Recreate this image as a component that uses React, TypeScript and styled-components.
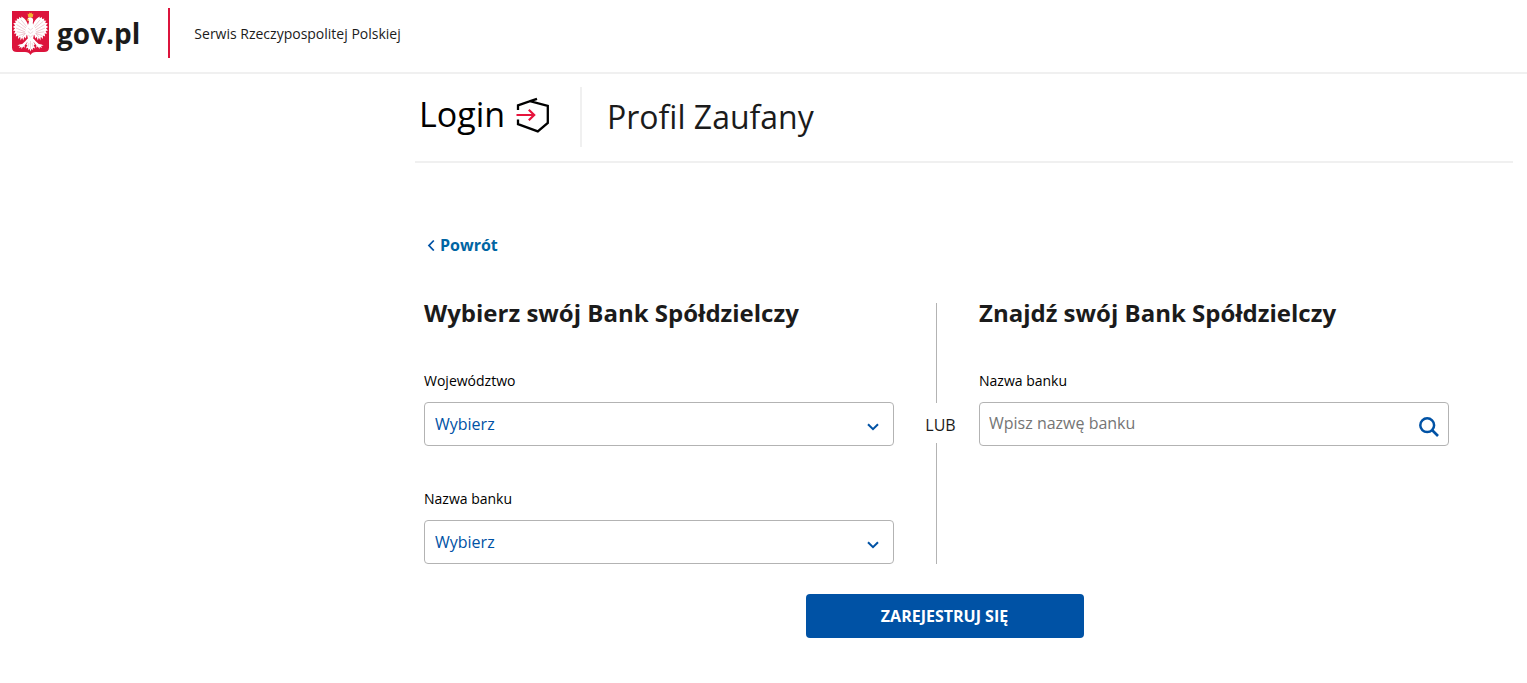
import React from 'react';
import styled, { createGlobalStyle } from 'styled-components';

const GlobalStyle = createGlobalStyle`
  *, *::before, *::after { box-sizing: border-box; }
  body {
    margin: 0;
    background: #fff;
    color: #1b1b1b;
    font-family: "Open Sans", "Noto Sans", sans-serif;
    font-size: 16px;
    line-height: 24px;
  }
`;

const TopBar = styled.header`
  display: flex;
  align-items: center;
  height: 74px;
  padding: 0 12px 6px;
  border-bottom: 2px solid #f0f0f0;
`;

const GovLink = styled.a`
  display: flex;
  align-items: center;
  gap: 8px;
  height: 50px;
  padding-right: 28px;
  border-right: 2px solid #dc143c;
  color: #1b1b1b;
  font-size: 28px;
  font-weight: 700;
  line-height: 36px;
  text-decoration: none;
`;

const ServiceName = styled.span`
  padding: 2px 0 0 24px;
  font-size: 14px;
`;

const Main = styled.main`
  padding: 13px 14px 0 415px;
`;

const Branding = styled.div`
  display: flex;
  height: 76px;
  border-bottom: 2px solid #f0f0f0;
`;

const LoginLink = styled.a`
  display: flex;
  align-items: center;
  justify-content: space-between;
  width: 167px;
  height: 60px;
  padding: 0 30px 6px 4px;
  border-right: 2px solid #f0f0f0;
  color: #000;
  font-size: 34px;
  line-height: 48px;
  text-decoration: none;
`;

const LoginIcon = styled.svg`
  margin-top: 2px;
`;

const ServiceTitle = styled.h1`
  margin: 0;
  padding: 6px 0 0 25px;
  font-size: 32px;
  font-weight: 400;
  line-height: 48px;
`;

const Content = styled.div`
  padding: 70px 64px 0 9px;
`;

const BackLink = styled.a`
  display: inline-flex;
  align-items: center;
  gap: 4px;
  padding-left: 3px;
  color: #0065a3;
  font-weight: 700;
  text-decoration: none;
`;

const Columns = styled.div`
  display: grid;
  grid-template-columns: minmax(0, 1fr) 85px minmax(0, 1fr);
  margin-top: 46px;
`;

const ColumnTitle = styled.h2`
  margin: 0 0 46px;
  font-size: 24px;
  font-weight: 700;
  line-height: 20px;
`;

const Field = styled.div`
  & + & { margin-top: 41px; }
`;

const Label = styled.label`
  display: block;
  margin-bottom: 9px;
  color: #000;
  font-size: 14px;
`;

const Control = styled.div`
  display: grid;
  align-items: center;

  & > * { grid-area: 1 / 1; }
`;

const Select = styled.select`
  appearance: none;
  width: 100%;
  height: 44px;
  padding: 0 40px 0 10px;
  border: 1px solid #b3b3b3;
  border-radius: 4px;
  background: #fff;
  color: #0052a5;
  font: inherit;
`;

const Chevron = styled.svg`
  justify-self: end;
  margin: 6px 15px 0 0;
  pointer-events: none;
`;

const SearchInput = styled.input`
  width: 100%;
  height: 44px;
  padding: 0 48px 2px 9px;
  border: 1px solid #b3b3b3;
  border-radius: 4px;
  background: #fff;
  color: #1b1b1b;
  font: inherit;

  &::placeholder { color: #757575; opacity: 1; }
`;

const SearchButton = styled.button`
  display: flex;
  justify-self: end;
  margin: 5px 10px 0 0;
  padding: 0;
  border: 0;
  background: none;
  cursor: pointer;
`;

const Divider = styled.div`
  display: flex;
  flex-direction: column;
  align-items: center;
`;

const Line = styled.div<{ $fill?: boolean }>`
  flex: ${({ $fill }) => ($fill ? '1' : '0 0 100px')};
  width: 1px;
  background: #b3b3b3;
`;

const Or = styled.span`
  padding: 4px 0 0 8px;
  line-height: 36px;
`;

const Actions = styled.div`
  display: flex;
  justify-content: center;
  padding: 30px 0 40px 16px;
`;

const SubmitButton = styled.button`
  width: 278px;
  height: 44px;
  border: 0;
  border-radius: 4px;
  background: #0052a5;
  color: #fff;
  font: inherit;
  font-weight: 700;
  text-transform: uppercase;
  cursor: pointer;
`;

const Wing = () => (
  <>
    <path
      d="M16.4 16.5C16.2 12 13.6 7.6 9.4 5.4L9.2 7.2 7 6 7 8 4.6 7.6 5.2 9.6 2.6 9.8 4 11.6 1.2 12.6 3.2 14.2 .9 16 3 17.2 1 19.6 3.4 20 2 22.8 4.4 22.6 3.8 25.6 6.2 24.6 6 28 8.2 25.8 8.6 29.4 10.2 26.4 11.2 29.4 12.4 25.8 13.8 27.4 14.6 24 17.6 22Z"
      fill="#fff"
    />
    <path
      d="M5.8 10.4 14 17M4.5 13.5 13.6 19.2M4 17 13.2 21M4.8 20.8 12.8 22M7 24.5 13 22.6M9 8.8 14.6 15.6M10.2 26 13.6 22"
      fill="none"
      stroke="#e3a9b6"
      strokeWidth=".6"
    />
    <path
      d="M15.6 27.4 13 30.6 10.2 33 7.4 33.4 5.4 34.6 8 35 6.8 37 9.2 36 9.6 38 11.2 35.6 12.8 36.8 12.6 34.4 14.6 31.8 17 30Z"
      fill="#fff"
    />
  </>
);

const Emblem = () => (
  <svg width="37" height="44" viewBox="0 0 37 44" aria-hidden="true">
    <path d="M0 0H37V36.5Q37 41 32 41H24Q20 41 18.5 44Q17 41 13 41H5Q0 41 0 36.5Z" fill="#dc143c" />
    <Wing />
    <g transform="matrix(-1 0 0 1 37 0)">
      <Wing />
    </g>
    <path
      d="M15.6 9.4 15.8 7.2Q17.2 5.9 19.4 6.4 21.6 7.2 21.2 9.5 20.2 11.8 21.4 15 23.4 20 21.4 26L20.8 30 23 33.6 21.6 34 23.2 37.6 21 36.8 20.6 39.2 19.5 37.8 18.5 40.4 17.5 37.8 16.4 39.2 16 36.8 13.8 37.6 15.4 34 14 33.6 16.2 30 15.6 26Q13.6 20 15.6 15 17 12 17 9.8Z"
      fill="#fff"
    />
    <path
      d="M16 17 18.5 19 21 17M15.8 20.5 18.5 22.5 21.2 20.5M16.2 24 18.5 26 20.8 24M18.5 30V38M17 32 16 36M20 32 21 36"
      fill="none"
      stroke="#e0bcc4"
      strokeWidth=".6"
    />
    <path d="M15.6 2.4 17 3.2 17.4 1.6 18.5 2.2 19.6 1.6 20 3.2 21.4 2.4 20.8 6.2H16.2Z" fill="#f2b632" />
    <path d="M16 7.6 14.6 9.4 17.2 9.2Z" fill="#f2b632" />
  </svg>
);

const LoginMark = () => (
  <LoginIcon width="34" height="36" viewBox="0 0 34 36" fill="none" aria-hidden="true">
    <path
      d="M2 13V8.4L14 4.2 31.8 8.8V26L21.8 34.4 2 27.2V22.4M13.4 4.4 21 1.8"
      stroke="#000"
      strokeWidth="2.3"
    />
    <path d="M.5 18H18M12.8 12.7 18.2 18 12.8 23.3" stroke="#e6143c" strokeWidth="2.2" />
  </LoginIcon>
);

const ChevronDown = () => (
  <Chevron width="12" height="8" viewBox="0 0 12 8" fill="none" aria-hidden="true">
    <path d="M1 1.2 6 6.2 11 1.2" stroke="#0052a5" strokeWidth="2" />
  </Chevron>
);

function BankSelect({ id, label }: { id: string; label: string }) {
  return (
    <Field>
      <Label htmlFor={id}>{label}</Label>
      <Control>
        <Select id={id} defaultValue="">
          <option value="">Wybierz</option>
        </Select>
        <ChevronDown />
      </Control>
    </Field>
  );
}

export default function App() {
  return (
    <>
      <GlobalStyle />
      <TopBar>
        <GovLink href="#gov">
          <Emblem />
          gov.pl
        </GovLink>
        <ServiceName>Serwis Rzeczypospolitej Polskiej</ServiceName>
      </TopBar>
      <Main>
        <Branding>
          <LoginLink href="#login">
            Login
            <LoginMark />
          </LoginLink>
          <ServiceTitle>Profil Zaufany</ServiceTitle>
        </Branding>
        <Content>
          <BackLink href="#back">
            <svg width="9" height="12" viewBox="0 0 9 12" fill="none" aria-hidden="true">
              <path d="M6.8 1.5 2 6.5 6.8 11.5" stroke="#0052a5" strokeWidth="1.8" />
            </svg>
            Powrót
          </BackLink>
          <form onSubmit={(event) => event.preventDefault()}>
            <Columns>
              <section>
                <ColumnTitle>Wybierz swój Bank Spółdzielczy</ColumnTitle>
                <BankSelect id="region" label="Województwo" />
                <BankSelect id="bank" label="Nazwa banku" />
              </section>
              <Divider>
                <Line />
                <Or>LUB</Or>
                <Line $fill />
              </Divider>
              <section>
                <ColumnTitle>Znajdź swój Bank Spółdzielczy</ColumnTitle>
                <Field>
                  <Label htmlFor="bank-search">Nazwa banku</Label>
                  <Control>
                    <SearchInput id="bank-search" type="text" placeholder="Wpisz nazwę banku" />
                    <SearchButton type="button" aria-label="Szukaj">
                      <svg width="20" height="20" viewBox="0 0 20 20" fill="none" aria-hidden="true">
                        <circle cx="8.2" cy="8.2" r="6.9" stroke="#0052a5" strokeWidth="2.5" />
                        <path d="M13 13 19 19" stroke="#0052a5" strokeWidth="2.7" />
                      </svg>
                    </SearchButton>
                  </Control>
                </Field>
              </section>
            </Columns>
            <Actions>
              <SubmitButton type="submit">Zarejestruj się</SubmitButton>
            </Actions>
          </form>
        </Content>
      </Main>
    </>
  );
}
